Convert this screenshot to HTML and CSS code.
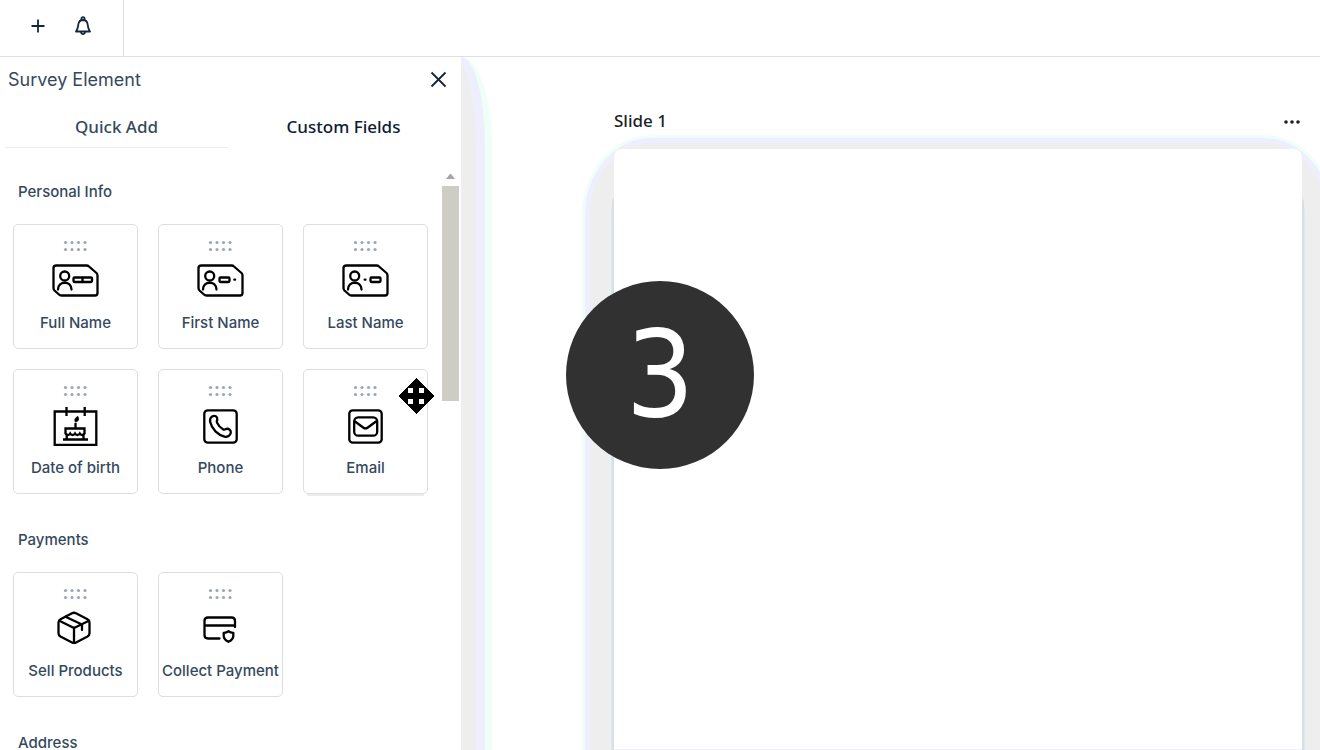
FILE: index.html
```html
<!DOCTYPE html>
<html lang="en">
<head>
  <meta charset="UTF-8" />
  <meta name="viewport" content="width=device-width, initial-scale=1.0"/>
  <title>Survey Builder</title>
  <link rel="stylesheet" href="styles.css">
</head>
<body>
  <svg class="defs" aria-hidden="true">
    <symbol id="grip" viewBox="0 0 49 12">
      <g fill="#9aa7b6">
        <circle cx="14.500" cy="2.5" r="1.6"/><circle cx="21" cy="2.5" r="1.6"/><circle cx="27.500" cy="2.5" r="1.6"/><circle cx="34" cy="2.5" r="1.6"/>
        <circle cx="14.500" cy="9.500" r="1.6"/><circle cx="21" cy="9.500" r="1.6"/><circle cx="27.500" cy="9.500" r="1.6"/><circle cx="34" cy="9.500" r="1.6"/>
      </g>
    </symbol>
    <symbol id="id-card" viewBox="0 0 49 48">
      <path d="M5.500 9.500H35.500q1.500 0 2.500 1L45.500 17q1 1 1 2.500V37q0 2.500-2.500 2.500H10.500q-1.500 0-2.500-1L3.500 34.500q-1-1-1-2.500V12q0-2.500 3-2.500z"/>
      <circle cx="13.700" cy="20" r="4.500"/>
      <path d="M7 33.500c0-9 13.500-9 13.500 0"/>
    </symbol>
  </svg>

  <header class="topbar">
    <div class="tools">
      <button class="icon-btn" aria-label="Add">
        <svg width="20" height="20" viewBox="0 0 20 20"><path d="M10 3.500v13M3.500 10h13"/></svg>
      </button>
      <button class="icon-btn" aria-label="Notifications">
        <svg width="20" height="20" viewBox="0 0 20 20"><path d="M3 15.500c2-2.500 2-4 2.300-7C5.700 5.500 7.500 4 10 4s4.300 1.500 4.700 4.500c.3 3 .3 4.500 2.300 7z"/><circle cx="10" cy="2.700" r="1.600"/><path d="M8 16c.3 2.700 3.700 2.700 4 0"/></svg>
      </button>
    </div>
  </header>

  <div class="workspace">
    <aside class="panel">
      <div class="panel-header">
        <h2>Survey Element</h2>
        <button class="icon-btn" aria-label="Close">
          <svg width="20" height="20" viewBox="0 0 20 20"><path d="M3.500 2.500l14 14M17.500 2.500l-14 14"/></svg>
        </button>
      </div>
      <div class="tabs" role="tablist">
        <button class="tab" role="tab" aria-selected="false">Quick Add</button>
        <button class="tab active" role="tab" aria-selected="true">Custom Fields</button>
      </div>
      <div class="panel-body">
        <div class="fields">
          <h3>Personal Info</h3>
          <div class="grid">
            <button class="card">
              <svg class="grip"><use href="#grip"/></svg>
              <svg class="icon" viewBox="0 0 49 48"><use href="#id-card"/><rect x="22.500" y="21.500" width="18.500" height="4.500" rx="1"/><path d="M31.500 22v4"/></svg>
              <span>Full Name</span>
            </button>
            <button class="card">
              <svg class="grip"><use href="#grip"/></svg>
              <svg class="icon" viewBox="0 0 49 48"><use href="#id-card"/><rect x="23.500" y="21.500" width="10" height="4.500" rx="1"/><path d="M38.300 23.700h.8"/></svg>
              <span>First Name</span>
            </button>
            <button class="card">
              <svg class="grip"><use href="#grip"/></svg>
              <svg class="icon" viewBox="0 0 49 48"><use href="#id-card"/><path d="M23.700 23.700h.8"/><rect x="29.500" y="21.500" width="10" height="4.500" rx="1"/></svg>
              <span>Last Name</span>
            </button>
            <button class="card">
              <svg class="grip"><use href="#grip"/></svg>
              <svg class="icon square" viewBox="0 0 49 48"><path d="M3.700 10.500h41.600v33.300H3.700zM15.500 6v9M33.700 6v9"/><path d="M14.500 27.500h19v5c-1.500 2-3.500 2-4.700 0-1.200 2-3.600 2-4.800 0-1.200 2-3.600 2-4.800 0-1.200 2-3.200 2-4.700 0zM15.700 34v4M32.500 34v4M12 38.500h25M24.500 22v5"/><path class="solid" d="M26.800 15.500c1.500 3 .5 5-2.500 5.500-1-2.800.2-4.500 2.500-5.500z"/></svg>
              <span>Date of birth</span>
            </button>
            <button class="card">
              <svg class="grip"><use href="#grip"/></svg>
              <svg class="icon" viewBox="0 0 49 48"><rect x="8.300" y="9.300" width="32.400" height="32.400" rx="3.500"/><path d="M16.200 15.400c2.500-1.500 5.300.2 5.100 3-.1 1.500-1 1.700-.3 3.200 1.200 2.800 3.300 5 6.300 6.800 1.300.8 1.800-.1 3-.5 2.500-.7 4.800 1.300 4.500 3.700-.4 3-3.500 4.800-6.300 4-6.700-1.800-12.700-7.400-14.300-14.500-.5-2.400.1-4.500 2-5.700z"/></svg>
              <span>Phone</span>
            </button>
            <button class="card dragging">
              <svg class="grip"><use href="#grip"/></svg>
              <svg class="icon" viewBox="0 0 49 48"><rect x="8.300" y="9.300" width="32.400" height="32.400" rx="3.500"/><rect x="13.200" y="16.300" width="23" height="18.400" rx="4"/><path d="M14 20.500l8.500 6.200q2 1.400 4 0l8.500-6.200"/></svg>
              <span>Email</span>
              <svg class="move-cursor" width="36" height="36" viewBox="0 0 36 36" shape-rendering="crispEdges"><path d="M18 0l18 18-18 18L0 18z" fill="#000"/><path d="M10 10h5v5h-5zM21 10h5v5h-5zM10 21h5v5h-5zM21 21h5v5h-5z" fill="#fff"/></svg>
            </button>
          </div>

          <h3>Payments</h3>
          <div class="grid">
            <button class="card">
              <svg class="grip"><use href="#grip"/></svg>
              <svg class="icon" viewBox="0 0 49 48"><path d="M21 9.300q2-1.100 4 0l11.500 6q2 1.100 2 3.200v10.700q0 2.200-2 3.300L25 38.400q-2 1.100-4 0L9.500 32.500q-2-1.100-2-3.300V18.500q0-2.100 2-3.200z"/><path d="M8.300 16.700L23 24l15-7.300M23 24v14.500M14.500 12.800L31 20.500V26"/></svg>
              <span>Sell Products</span>
            </button>
            <button class="card">
              <svg class="grip"><use href="#grip"/></svg>
              <svg class="icon" viewBox="0 0 49 48"><path d="M23.500 34.500H12q-3.500 0-3.500-3.500V17q0-3.500 3.500-3.500h23.500q3.500 0 3.500 3.500v6M8.500 21.500H39"/><path d="M32.500 27.300q2.200 1.600 4.800 1.500v3.200c0 2.800-2.300 4.600-4.800 5.800-2.500-1.200-4.800-3-4.800-5.800v-3.200q2.600.1 4.800-1.500z"/></svg>
              <span>Collect Payment</span>
            </button>
          </div>

          <h3>Address</h3>
        </div>
        <div class="scrollbar">
          <div class="arrow"></div>
          <div class="thumb"></div>
        </div>
      </div>
    </aside>

    <main class="canvas">
      <div class="slide-header">
        <h1>Slide 1</h1>
        <button class="icon-btn" aria-label="Slide options">
          <svg width="20" height="20" viewBox="0 0 20 20"><g class="dots"><circle cx="4" cy="12" r="1.800"/><circle cx="10" cy="12" r="1.800"/><circle cx="16" cy="12" r="1.800"/></g></svg>
        </button>
      </div>
      <div class="halo">
        <div class="slide"></div>
      </div>
    </main>
  </div>

  <div class="countdown">3</div>
</body>
</html>
```

FILE: styles.css
```css
*, *::after {
  box-sizing: border-box;
}
body {
  font-family: Inter, "Liberation Sans", sans-serif;
  background: #fff;
  color: #34495e;
  display: flex;
  flex-direction: column;
  height: 100vh;
  margin: 0;
  overflow: hidden;
}
h1, h2, h3 {
  margin: 0;
}
button {
  font-family: inherit;
  color: inherit;
  background: none;
  border: 0;
  padding: 0;
}
svg {
  display: block;
}
.defs {
  position: absolute;
  width: 0;
  height: 0;
}

/* top bar */
.topbar {
  display: flex;
  flex: none;
  height: 57px;
  border-bottom: 1px solid #dedfe1;
}
.tools {
  display: flex;
  gap: 25px;
  padding: 16px 30px 0 28px;
  border-right: 1px solid #dedfe1;
}
.icon-btn {
  width: 20px;
  height: 20px;
}
.icon-btn path,
.icon-btn circle {
  fill: none;
  stroke: #14263a;
  stroke-width: 1.8;
  stroke-linejoin: round;
}
.icon-btn .dots circle {
  fill: #1c1f26;
  stroke: none;
}

.workspace {
  display: flex;
  flex: 1;
  min-height: 0;
}

/* left panel */
.panel {
  position: relative;
  display: flex;
  flex-direction: column;
  flex: none;
  width: 461px;
}
.panel::after {
  content: "";
  position: absolute;
  top: 0;
  left: 100%;
  width: 31px;
  height: 100%;
  background: #eee;
  border-right: 7px solid #edfff7;
  border-radius: 0 31px 0 0 / 0 90px 0 0;
  box-shadow: inset -9px 0 #eef;
}
.panel-header {
  display: flex;
  justify-content: space-between;
  align-items: center;
  height: 46px;
  padding: 0 13px 0 8px;
}
.panel-header h2 {
  font-size: 18px;
  line-height: 20px;
  font-weight: 400;
}
.tabs {
  display: flex;
  gap: 4px;
  padding: 0 6px 0 5px;
}
.tab {
  flex: 1;
  height: 45px;
  padding-top: 3px;
  border-bottom: 1px solid #e9ebed;
  font: 500 17px "Noto Sans", sans-serif;
}
.tab.active {
  border-color: transparent;
  color: #0f1b33;
}
.panel-body {
  display: flex;
  flex: 1;
  min-height: 0;
  padding: 20px 2px 0 13px;
}
.fields {
  flex: 1;
  min-width: 0;
  overflow: hidden;
}
.fields h3 {
  padding: 14px 5px 22px;
  font-size: 15px;
  line-height: 20px;
  font-weight: 500;
}
.grid {
  display: grid;
  grid-template-columns: repeat(3, 125px);
  gap: 20px;
  margin-bottom: 22px;
}
.card {
  position: relative;
  display: flex;
  flex-direction: column;
  align-items: center;
  height: 125px;
  padding-top: 15px;
  border: 1px solid #dcdee0;
  border-radius: 5px;
  font-size: 15px;
  line-height: 20px;
  font-weight: 500;
  white-space: nowrap;
}
.grip {
  width: 49px;
  height: 12px;
  margin-bottom: 4px;
}
.icon {
  width: 49px;
  height: 48px;
  margin-bottom: 9px;
  fill: none;
  stroke: #000;
  stroke-width: 2.3;
  stroke-linecap: round;
  stroke-linejoin: round;
}
.icon.square {
  stroke-linecap: butt;
  stroke-linejoin: miter;
}
.icon .solid {
  fill: #000;
  stroke-width: 1;
}
.card.dragging {
  box-shadow: 0 6px 0 -4px #ececec;
}
.move-cursor {
  position: absolute;
  top: 8px;
  right: -7px;
}
.scrollbar {
  width: 17px;
}
.arrow {
  width: 9px;
  margin: 6px auto 7px;
  border: 4px solid transparent;
  border-top: 0;
  border-bottom: 5px solid #a8a3aa;
}
.thumb {
  height: 215px;
  background: #cdcdc4;
}

/* slide area */
.canvas {
  display: flex;
  flex-direction: column;
  flex: 1;
  min-width: 0;
  overflow: hidden;
  padding: 48px 18px 0 153px;
}
.slide-header {
  display: flex;
  flex: none;
  justify-content: space-between;
  align-items: center;
  height: 30px;
}
.slide-header h1 {
  font: 500 17px "Noto Sans", sans-serif;
  color: #1c1f26;
}
.halo {
  display: flex;
  flex: 1;
  margin: 0 -32px -5px;
  padding: 11px 29px 5px;
  background: #eee;
  border: 3px solid #edfff7;
  border-bottom: 0;
  border-radius: 70px 70px 0 0 / 80px 80px 0 0;
  box-shadow: inset 0 0 0 5px #eef;
}
.slide {
  flex: 1;
  background: #fff;
  border-bottom: 1px solid #eef;
  border-radius: 8px 8px 0 0;
  box-shadow: -2px 46px #dcdde5, 2px 46px #dcdde5, -3px 54px #d2eeee, 3px 54px #d2eeee;
}

.countdown {
  position: fixed;
  top: 50%;
  left: 50%;
  transform: translate(-50%, -50%);
  width: 188px;
  height: 188px;
  border-radius: 50%;
  background: #313131;
  color: #fff;
  font: 400 120px/188px "DejaVu Sans Condensed", "DejaVu Sans", sans-serif;
  text-align: center;
}
```
